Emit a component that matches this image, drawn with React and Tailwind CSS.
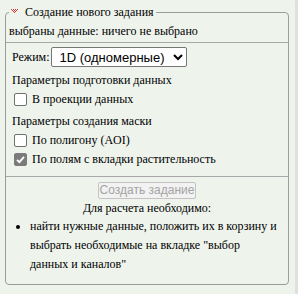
import React from 'react';

function DotArrow() {
    // little red dotted triangle next to the legend
    const dots = [
        [0, 0], [2, 0], [4, 0], [6, 0],
        [1, 1], [3, 1], [5, 1],
        [2, 2], [4, 2],
        [3, 3],
    ];
    return (
        <svg width="7" height="4" viewBox="0 0 7 4" className="block">
            {dots.map(([x, y], i) => (
                <rect key={i} x={x} y={y} width="1" height="1" fill="#e8332c" />
            ))}
        </svg>
    );
}

function Check({ checked, label }) {
    return (
        <label className="flex items-center h-[19px] pl-[6px]">
            <span
                className={`relative w-[13px] h-[13px] mr-[5px] rounded-[2px] border shrink-0 ${checked
                    ? 'bg-[#7b7b7b] border-[#7b7b7b]'
                    : 'bg-white border-[#707070]'
                    }`}
            >
                {checked && (
                    <svg viewBox="0 0 13 13" className="absolute -inset-px w-[13px] h-[13px]">
                        <path d="M3 6.8 L5.4 9.2 L10 3.8" fill="none" stroke="#fff" strokeWidth="1.8" />
                    </svg>
                )}
            </span>
            <span>{label}</span>
        </label>
    );
}

export default function App() {
    return (
        <div className="w-[298px] h-[294px] bg-[#eef3ec] pt-[3px] pl-[5px] border-r-[3px] border-[#dde2dc] font-['Liberation_Serif',serif] text-[12px] text-black leading-[19px]">
            <fieldset className="w-[284px] h-[282px] border border-[#9c9c9c] rounded-[4px] px-[2px] pb-0 pt-0 m-0">
                <legend className="flex items-center h-[19px] ml-[1px] px-[2px]">
                    <span className="mr-[7px] -mt-[3px]"><DotArrow /></span>
                    <span>Создание нового задания</span>
                </legend>

                <div className="h-[19px] pl-[1px]">выбраны данные: ничего не выбрано</div>
                <hr className="border-0 border-t border-[#a8a8a8] mt-[1px] -mx-[2px]" />

                <div className="flex items-center pl-[4px] h-[20px] mt-[4px]">
                    <span className="mr-[2px]">Режим:</span>
                    <select
                        defaultValue="1d"
                        className="h-[20px] w-[136px] border border-[#767676] rounded-[2px] bg-white font-['Liberation_Sans',sans-serif] text-[13px] leading-[16px] pl-[3px]"
                    >
                        <option value="1d">1D (одномерные)</option>
                    </select>
                </div>

                <div className="pl-[4px] mt-[4px] h-[19px]">Параметры подготовки данных</div>
                <Check label="В проекции данных" />

                <div className="pl-[4px] mt-[3px] h-[19px]">Параметры создания маски</div>
                <Check label="По полигону (AOI)" />
                <Check label="По полям с вкладки растительность" checked />

                <hr className="border-0 border-t border-[#a8a8a8] mt-[7px] -mx-[2px]" />

                <div className="flex justify-center mt-[5px]">
                    <button
                        disabled
                        className="h-[17px] px-[1px] border border-[#c4c4c4] rounded-[2px] bg-[#f2f2f2] text-[#a3a3a3] font-['Liberation_Sans',sans-serif] text-[12px] leading-[15px]"
                    >
                        Создать задание
                    </button>
                </div>
                <div className="text-center h-[19px]">Для расчета необходимо:</div>

                <ul className="list-disc pl-[22px] pr-[8px] -mt-[1px]">
                    <li>найти нужные данные, положить их в корзину и выбрать необходимые на вкладке "выбор данных и каналов"</li>
                </ul>
            </fieldset>
        </div>
    );
}
